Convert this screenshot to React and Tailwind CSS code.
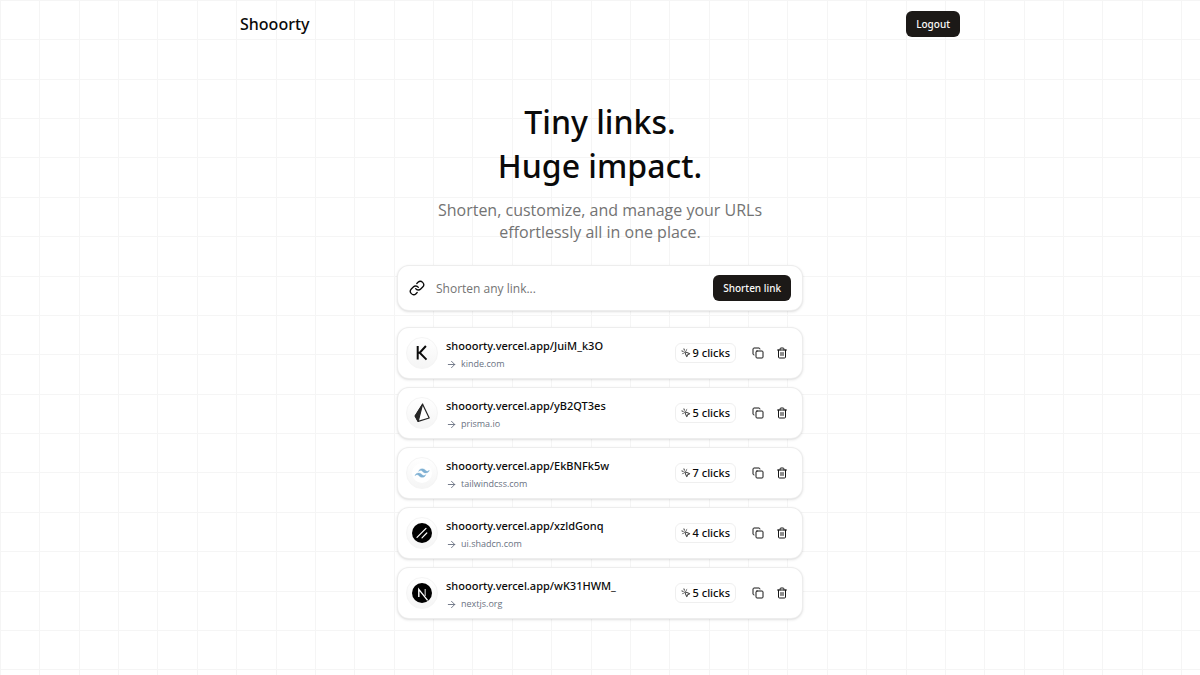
import React from "react";
import { ArrowRight, Copy, Link, MousePointerClick, Trash2 } from "lucide-react";

const offsets = [0, 39, 79, 118, 157, 197, 236, 276];

function GridBackdrop() {
  return (
    <svg className="absolute inset-0 -z-10 size-full" aria-hidden="true">
      <defs>
        <pattern id="grid" width="315" height="315" patternUnits="userSpaceOnUse">
          {offsets.map((o) => (
            <g key={o} fill="#f5f5f5">
              <rect x={o} y="0" width="1" height="315" />
              <rect x="0" y={o} width="315" height="1" />
            </g>
          ))}
        </pattern>
      </defs>
      <rect width="100%" height="100%" fill="url(#grid)" />
    </svg>
  );
}

function KindeLogo() {
  return (
    <svg viewBox="0 0 20 20" className="size-5" fill="none" stroke="#0a0a0a" strokeWidth="2" aria-hidden="true">
      <path d="M5.7 3v13.6M13.9 3 7.7 9.8l6.8 6.8M5.7 9.8h2.4" />
    </svg>
  );
}

function PrismaLogo() {
  return (
    <svg viewBox="0 0 20 20" className="size-5" aria-hidden="true">
      <path d="M10.6 1.2 3.2 13l3 5.4L17.2 15z" fill="#fff" stroke="#262626" strokeWidth="1.2" strokeLinejoin="round" />
      <path d="M10.6 1.2 3.2 13l3 5.4z" fill="#262626" stroke="#262626" strokeWidth="1.2" strokeLinejoin="round" />
    </svg>
  );
}

function TailwindLogo() {
  return (
    <svg viewBox="0 0 20 20" className="size-5" aria-hidden="true">
      <circle cx="10" cy="10" r="10" fill="#fff" />
      <g transform="translate(3 2.8) scale(0.6)" fill="#7fb0d3" stroke="#7fb0d3" strokeWidth="0.5">
        <path d="M12.001 4.8c-3.2 0-5.2 1.6-6 4.8 1.2-1.6 2.6-2.2 4.2-1.8.913.228 1.565.89 2.288 1.624C13.666 10.618 15.027 12 18.001 12c3.2 0 5.2-1.6 6-4.8-1.2 1.6-2.6 2.2-4.2 1.8-.913-.228-1.565-.89-2.288-1.624C16.337 6.182 14.976 4.8 12.001 4.8zm-6 7.2c-3.2 0-5.2 1.6-6 4.8 1.2-1.6 2.6-2.2 4.2-1.8.913.228 1.565.89 2.288 1.624 1.177 1.194 2.538 2.576 5.512 2.576 3.2 0 5.2-1.6 6-4.8-1.2 1.6-2.6 2.2-4.2 1.8-.913-.228-1.565-.89-2.288-1.624C10.337 13.382 8.976 12 6.001 12z" />
      </g>
    </svg>
  );
}

function ShadcnLogo() {
  return (
    <svg viewBox="0 0 20 20" className="size-5" fill="none" stroke="#fff" strokeLinecap="round" aria-hidden="true">
      <circle cx="10" cy="10" r="10" fill="#000" stroke="none" />
      <path d="m5 14.4 9-9M10 14.8l4.8-4.8" strokeWidth="1.2" />
    </svg>
  );
}

function NextLogo() {
  return (
    <svg viewBox="0 0 20 20" className="size-5" fill="none" stroke="#fff" aria-hidden="true">
      <circle cx="10" cy="10" r="10" fill="#000" stroke="none" />
      <path d="M6.8 14V6.4l8.8 11" strokeWidth="1.4" />
      <path d="M13.2 6v7" strokeWidth="1.3" strokeOpacity="0.7" />
    </svg>
  );
}

const links = [
  { slug: "JuiM_k3O", site: "kinde.com", clicks: 9, Logo: KindeLogo },
  { slug: "yB2QT3es", site: "prisma.io", clicks: 5, Logo: PrismaLogo },
  { slug: "EkBNFk5w", site: "tailwindcss.com", clicks: 7, Logo: TailwindLogo },
  { slug: "xzldGonq", site: "ui.shadcn.com", clicks: 4, Logo: ShadcnLogo },
  { slug: "wK31HWM_", site: "nextjs.org", clicks: 5, Logo: NextLogo },
];

function LinkCard({ slug, site, clicks, Logo }) {
  return (
    <li className="flex h-[52px] items-center rounded-xl border border-neutral-200/70 bg-white px-2 shadow-sm">
      <span className="flex size-8 shrink-0 items-center justify-center rounded-full border border-neutral-100 bg-linear-to-b from-white to-neutral-100">
        <Logo />
      </span>
      <div className="ml-2 flex min-w-0 flex-1 flex-col gap-0.5 pt-1">
        <a href={`https://shooorty.vercel.app/${slug}`} className="truncate font-['Noto_Sans',sans-serif] text-[11px] leading-4 font-medium text-neutral-950">
          shooorty.vercel.app/{slug}
        </a>
        <p className="flex items-center gap-1 text-[9px] leading-4 text-gray-500">
          <ArrowRight className="size-[11px]" />
          {site}
        </p>
      </div>
      <span className="flex h-5 items-center gap-0.5 rounded-md border border-neutral-200/60 px-[5px] font-['Noto_Sans',sans-serif] text-[11px] leading-4 font-medium text-neutral-950">
        <MousePointerClick className="size-2.5" />
        {clicks} clicks
      </span>
      <div className="mr-1.5 ml-4 flex gap-3">
        <button type="button" aria-label="Copy link" className="text-neutral-900">
          <Copy className="size-3" />
        </button>
        <button type="button" aria-label="Delete link" className="text-neutral-900">
          <Trash2 className="size-3" />
        </button>
      </div>
    </li>
  );
}

export default function App() {
  return (
    <div className="relative isolate min-h-screen bg-white font-['Open_Sans','Noto_Sans',sans-serif] text-neutral-950">
      <GridBackdrop />
      <header className="mx-auto flex h-12 w-full max-w-180 items-center justify-between">
        <a href="/" className="font-['Noto_Sans',sans-serif] text-base font-medium">Shooorty</a>
        <button type="button" className="h-[26px] rounded-md bg-stone-900 px-2.5 font-['Noto_Sans',sans-serif] text-[10px] font-medium text-stone-50">
          Logout
        </button>
      </header>
      <main className="mx-auto flex w-full max-w-[406px] flex-col pt-13">
        <h1 className="text-center font-['Noto_Sans',sans-serif] text-[32px] leading-11 font-medium">
          Tiny links.
          <br />
          Huge impact.
        </h1>
        <p className="mt-[11px] text-center text-base leading-[22px] text-neutral-500">
          Shorten, customize, and manage your URLs
          <br />
          effortlessly all in one place.
        </p>
        <form
          className="mt-[22px] flex h-[46px] items-center gap-[11px] rounded-xl border border-neutral-200/70 bg-white px-[11px] shadow-sm"
          onSubmit={(e) => e.preventDefault()}
        >
          <label htmlFor="url">
            <Link className="size-4" aria-label="Link to shorten" />
          </label>
          <input
            id="url"
            type="text"
            placeholder="Shorten any link..."
            className="min-w-0 flex-1 bg-transparent pt-0.5 text-xs outline-none placeholder:text-neutral-500"
          />
          <button type="submit" className="h-[26px] rounded-md bg-stone-900 px-2.5 font-['Noto_Sans',sans-serif] text-[10px] font-medium text-stone-50">
            Shorten link
          </button>
        </form>
        <ul className="mt-4 flex flex-col gap-2">
          {links.map((link) => (
            <LinkCard key={link.slug} {...link} />
          ))}
        </ul>
      </main>
    </div>
  );
}
